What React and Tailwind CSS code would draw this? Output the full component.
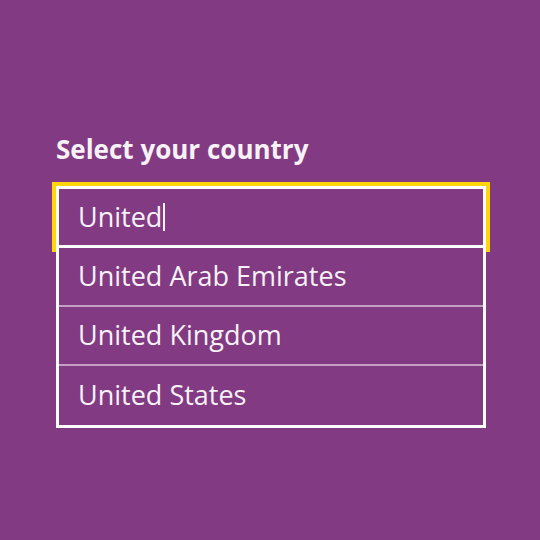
export default function App() {
  const items = ["United Arab Emirates", "United Kingdom", "United States"];
  return (
    <div
      className="w-[540px] h-[540px] bg-[#823b82] text-[#f7f2f7] pl-[56px] pt-[133px]"
      style={{ fontFamily: "'Open Sans', Lato, sans-serif" }}
    >
      <h1 className="text-[26px] font-bold leading-[32px] m-0">Select your country</h1>
      <div className="mt-[21px] w-[430px]">
        <div className="h-[62px] border-[3px] border-white outline-[4px] outline-solid outline-[#ffd60a] flex items-center pl-[19px] text-[27px]">
          <span>United</span>
          <span className="inline-block w-[2px] h-[28px] bg-[#f7f2f7] ml-[1px]"></span>
        </div>
        <div className="border-[3px] border-t-0 border-white relative z-10 bg-[#823b82]">
          {items.map((t, i) => (
            <div
              key={t}
              className={
                "h-[59px] flex items-center pl-[19px] text-[27px] " +
                (i < items.length - 1 ? "border-b-2 border-[#c39fc3]" : "")
              }
            >
              {t}
            </div>
          ))}
        </div>
      </div>
    </div>
  );
}
